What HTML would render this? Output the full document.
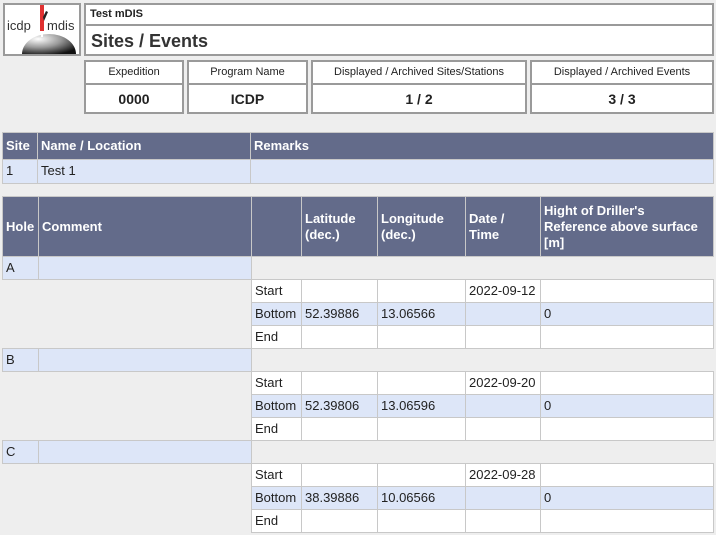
<!DOCTYPE html>
<html><head><meta charset="utf-8"><style>
body{margin:0;width:716px;height:535px;background:#eeeeee;font-family:"Liberation Sans",Arial,sans-serif;position:relative;overflow:hidden;color:#222}
.b{position:absolute;box-sizing:border-box;border:2px solid #9a9a9a;background:#fff}
.r{position:absolute;left:0;width:716px}
.c{position:absolute;top:0;bottom:0;box-sizing:border-box;border:1px solid #c8c8c8;padding:0 3px;font-size:13px;line-height:21px;white-space:nowrap;overflow:hidden}
.h{background:#636b8a;color:#fff;font-weight:bold;border-color:#c8c8c8}
.l{background:#dde6f8}
.w{background:#fff}
.c1{left:2px;width:37px}.c2{left:38px;width:214px}.c3{left:251px;width:51px}.c4{left:301px;width:77px}.c5{left:377px;width:89px}.c6{left:465px;width:76px}.c7{left:540px;width:174px}
.hd .c{display:flex;align-items:center;line-height:16px;white-space:normal}
.ib{position:absolute;box-sizing:border-box;border:2px solid #9a9a9a;background:#fff;top:60px;height:54px;text-align:center}
.ib .t{height:21px;line-height:21px;font-size:11px;border-bottom:2px solid #9a9a9a}
.ib .v{line-height:28px;font-size:14px;font-weight:bold}
</style></head><body>
<div class="b" style="left:3px;top:3px;width:78px;height:53px;overflow:hidden">
<svg width="74" height="49" viewBox="0 0 74 49" style="display:block">
<defs><radialGradient id="g" cx="0.3" cy="0.25" r="0.85"><stop offset="0" stop-color="#fff"/><stop offset="0.5" stop-color="#999"/><stop offset="1" stop-color="#111"/></radialGradient></defs>
<path d="M17 49 A27 20 0 0 1 71 49 Z" fill="url(#g)"/>
<rect x="35" y="0" width="4" height="26" fill="#e03030"/>
<rect x="36" y="26" width="2" height="6" fill="#fff"/>
<path d="M38 12 L41 6 L43 7 L39 16 Z" fill="#222"/>
<text x="2" y="25" font-size="13" font-family="Liberation Sans" fill="#333">icdp</text>
<text x="42" y="25" font-size="13" font-family="Liberation Sans" fill="#333">mdis</text>
</svg></div>
<div class="b" style="left:84px;top:3px;width:630px;height:53px">
<div style="height:19px;line-height:19px;font-size:11px;font-weight:bold;padding-left:4px;border-bottom:2px solid #9a9a9a">Test mDIS</div>
<div style="line-height:30px;font-size:18px;font-weight:bold;padding-left:5px;color:#333">Sites / Events</div>
</div>
<div class="ib" style="left:84px;width:100px"><div class="t">Expedition</div><div class="v">0000</div></div>
<div class="ib" style="left:187px;width:121px"><div class="t">Program Name</div><div class="v">ICDP</div></div>
<div class="ib" style="left:311px;width:216px"><div class="t">Displayed / Archived Sites/Stations</div><div class="v">1 / 2</div></div>
<div class="ib" style="left:530px;width:184px"><div class="t">Displayed / Archived Events</div><div class="v">3 / 3</div></div>

<div class="r" style="top:132px;height:28px"><div class="c h" style="left:2px;width:36px;line-height:26px">Site</div><div class="c h" style="left:37px;width:214px;line-height:26px">Name / Location</div><div class="c h" style="left:250px;width:464px;line-height:26px">Remarks</div></div>
<div class="r" style="top:159px;height:25px"><div class="c l" style="left:2px;width:36px">1</div><div class="c l" style="left:37px;width:214px">Test 1</div><div class="c l" style="left:250px;width:464px"></div></div>

<div class="r hd" style="top:196px;height:61px"><div class="c h c1">Hole</div><div class="c h c2">Comment</div><div class="c h c3"></div><div class="c h c4">Latitude<br>(dec.)</div><div class="c h c5">Longitude<br>(dec.)</div><div class="c h c6">Date /<br>Time</div><div class="c h c7">Hight of Driller's Reference above surface [m]</div></div>

<div class="r" style="top:256px;height:24px"><div class="c l c1">A</div><div class="c l c2"></div></div>
<div class="r" style="top:279px;height:24px"><div class="c w c3">Start</div><div class="c w c4"></div><div class="c w c5"></div><div class="c w c6">2022-09-12</div><div class="c w c7"></div></div>
<div class="r" style="top:302px;height:24px"><div class="c l c3">Bottom</div><div class="c l c4">52.39886</div><div class="c l c5">13.06566</div><div class="c l c6"></div><div class="c l c7">0</div></div>
<div class="r" style="top:325px;height:24px"><div class="c w c3">End</div><div class="c w c4"></div><div class="c w c5"></div><div class="c w c6"></div><div class="c w c7"></div></div>

<div class="r" style="top:348px;height:24px"><div class="c l c1">B</div><div class="c l c2"></div></div>
<div class="r" style="top:371px;height:24px"><div class="c w c3">Start</div><div class="c w c4"></div><div class="c w c5"></div><div class="c w c6">2022-09-20</div><div class="c w c7"></div></div>
<div class="r" style="top:394px;height:24px"><div class="c l c3">Bottom</div><div class="c l c4">52.39806</div><div class="c l c5">13.06596</div><div class="c l c6"></div><div class="c l c7">0</div></div>
<div class="r" style="top:417px;height:24px"><div class="c w c3">End</div><div class="c w c4"></div><div class="c w c5"></div><div class="c w c6"></div><div class="c w c7"></div></div>

<div class="r" style="top:440px;height:24px"><div class="c l c1">C</div><div class="c l c2"></div></div>
<div class="r" style="top:463px;height:24px"><div class="c w c3">Start</div><div class="c w c4"></div><div class="c w c5"></div><div class="c w c6">2022-09-28</div><div class="c w c7"></div></div>
<div class="r" style="top:486px;height:24px"><div class="c l c3">Bottom</div><div class="c l c4">38.39886</div><div class="c l c5">10.06566</div><div class="c l c6"></div><div class="c l c7">0</div></div>
<div class="r" style="top:509px;height:24px"><div class="c w c3">End</div><div class="c w c4"></div><div class="c w c5"></div><div class="c w c6"></div><div class="c w c7"></div></div>
</body></html>
